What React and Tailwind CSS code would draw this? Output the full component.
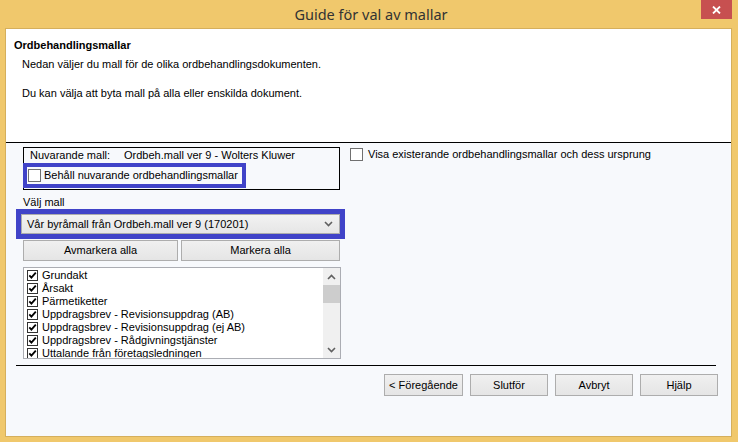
import React from "react";

const items = [
  "Grundakt",
  "Årsakt",
  "Pärmetiketter",
  "Uppdragsbrev - Revisionsuppdrag (AB)",
  "Uppdragsbrev - Revisionsuppdrag (ej AB)",
  "Uppdragsbrev - Rådgivningstjänster",
  "Uttalande från företagsledningen",
];

function CheckedBox() {
  return (
    <svg width="11" height="11" viewBox="0 0 11 11" className="shrink-0">
      <rect x="0.5" y="0.5" width="10" height="10" fill="#fff" stroke="#333" />
      <path d="M2.3 5.4 L4.4 7.7 L8.8 2.6" fill="none" stroke="#000" strokeWidth="1.8" />
    </svg>
  );
}

function EmptyBox() {
  return <div className="w-[13px] h-[13px] border border-[#707070] bg-white shrink-0" />;
}

function Chevron({ up }) {
  return (
    <svg width="9" height="6" viewBox="0 0 9 6">
      <path d={up ? "M1 5 L4.5 1.5 L8 5" : "M1 1 L4.5 4.5 L8 1"} fill="none" stroke="#606060" strokeWidth="1.6" />
    </svg>
  );
}

function WinButton({ children, className = "" }) {
  return (
    <button className={`h-[21px] border border-[#ADADAD] bg-gradient-to-b from-[#F0F0F0] to-[#E5E5E5] text-[11px] text-black ${className}`}>
      {children}
    </button>
  );
}

export default function App() {
  return (
    <div
      className="w-[738px] h-[442px] bg-[#F0C86C] flex flex-col text-black"
      style={{ fontFamily: '"Liberation Sans", Arial, sans-serif' }}
    >
      {/* Title bar */}
      <div className="relative h-[28px] shrink-0 flex items-center justify-center">
        <span className="text-[14.5px] text-[#333] mt-[1px] ml-[4px]" style={{ fontFamily: '"Noto Sans", sans-serif' }}>
          Guide för val av mallar
        </span>
        <div className="absolute right-[6px] top-0 w-[31px] h-[19px] bg-[#C75050] flex items-center justify-center">
          <svg width="9" height="8" viewBox="0 0 9 8">
            <path d="M1 0.5 L8 7.5 M8 0.5 L1 7.5" stroke="#fff" strokeWidth="1.8" />
          </svg>
        </div>
      </div>

      {/* Client area */}
      <div className="flex-1 mx-[5px] mb-[5px] w-[727px] border border-[#D5AF5C] flex flex-col">
        {/* Header */}
        <div className="h-[114px] bg-white border-b border-black shrink-0 pl-[8px] pt-[9px]">
          <div className="text-[11px] font-bold leading-[14px]">Ordbehandlingsmallar</div>
          <div className="pl-[8px] text-[11px] leading-[14px] mt-[5px]">
            Nedan väljer du mall för de olika ordbehandlingsdokumenten.
          </div>
          <div className="pl-[8px] text-[11px] leading-[14px] mt-[15px]">
            Du kan välja att byta mall på alla eller enskilda dokument.
          </div>
        </div>

        {/* Body */}
        <div className="flex-1 bg-[#F7F9FC] flex flex-col">
          <div className="flex pl-[17px] pt-[4px]">
            {/* Left column */}
            <div className="w-[317px] flex flex-col">
              <div className="border border-black h-[43px] flex flex-col">
                <div className="flex text-[11px] leading-[15px] pl-[6px]">
                  <span className="w-[94px]">Nuvarande mall:</span>
                  <span>Ordbeh.mall ver 9 - Wolters Kluwer</span>
                </div>
                <div className="-ml-[1px] w-[223px] h-[25px] border-[4px] border-[#4043C8] flex items-center gap-[3px] pl-[1px]">
                  <EmptyBox />
                  <span className="text-[11px] leading-[13px]">Behåll nuvarande ordbehandlingsmallar</span>
                </div>
              </div>

              <div className="text-[11px] leading-[13px] mt-[6px] h-[13px]">Välj mall</div>

              <div className="-ml-[7px] w-[329px] h-[30px] border-[5px] border-[#4043C8]">
                <div className="h-full border border-[#ACACAC] bg-gradient-to-b from-[#F2F2F2] to-[#E6E6E6] flex items-center justify-between pl-[5px] pr-[6px]">
                  <span className="text-[11px]">Vår byråmall från Ordbeh.mall ver 9 (170201)</span>
                  <Chevron />
                </div>
              </div>

              <div className="flex gap-[3px] mt-[1px]">
                <WinButton className="w-[155px]">Avmarkera alla</WinButton>
                <WinButton className="flex-1">Markera alla</WinButton>
              </div>

              <div className="mt-[6px] h-[92px] w-[318px] border border-[#ABADB3] bg-white flex">
                <div className="flex-1 pl-[3px] pt-[1px] overflow-hidden">
                  {items.map((t) => (
                    <div key={t} className="flex items-center gap-[4px] h-[13px]">
                      <CheckedBox />
                      <span className="text-[11px] leading-[13px] whitespace-nowrap">{t}</span>
                    </div>
                  ))}
                </div>
                <div className="w-[17px] bg-[#F0F0F0] flex flex-col items-center">
                  <div className="h-[17px] flex items-center justify-center">
                    <Chevron up />
                  </div>
                  <div className="w-[17px] h-[18px] bg-[#CDCDCD]" />
                  <div className="flex-1" />
                  <div className="h-[17px] flex items-center justify-center">
                    <Chevron />
                  </div>
                </div>
              </div>
            </div>

            {/* Right column */}
            <div className="ml-[10px] pt-[1px] flex items-start gap-[5px]">
              <EmptyBox />
              <span className="text-[11px] leading-[13px]">Visa existerande ordbehandlingsmallar och dess ursprung</span>
            </div>
          </div>

          <div className="ml-[10px] w-[700px] h-[1px] bg-black mt-[6px]" />

          <div className="flex justify-end gap-[7px] pr-[13px] mt-[8px]">
            <WinButton className="w-[79px] h-[22px]">&lt; Föregående</WinButton>
            <WinButton className="w-[78px] h-[22px]">Slutför</WinButton>
            <WinButton className="w-[78px] h-[22px]">Avbryt</WinButton>
            <WinButton className="w-[78px] h-[22px]">Hjälp</WinButton>
          </div>
        </div>
      </div>
    </div>
  );
}
